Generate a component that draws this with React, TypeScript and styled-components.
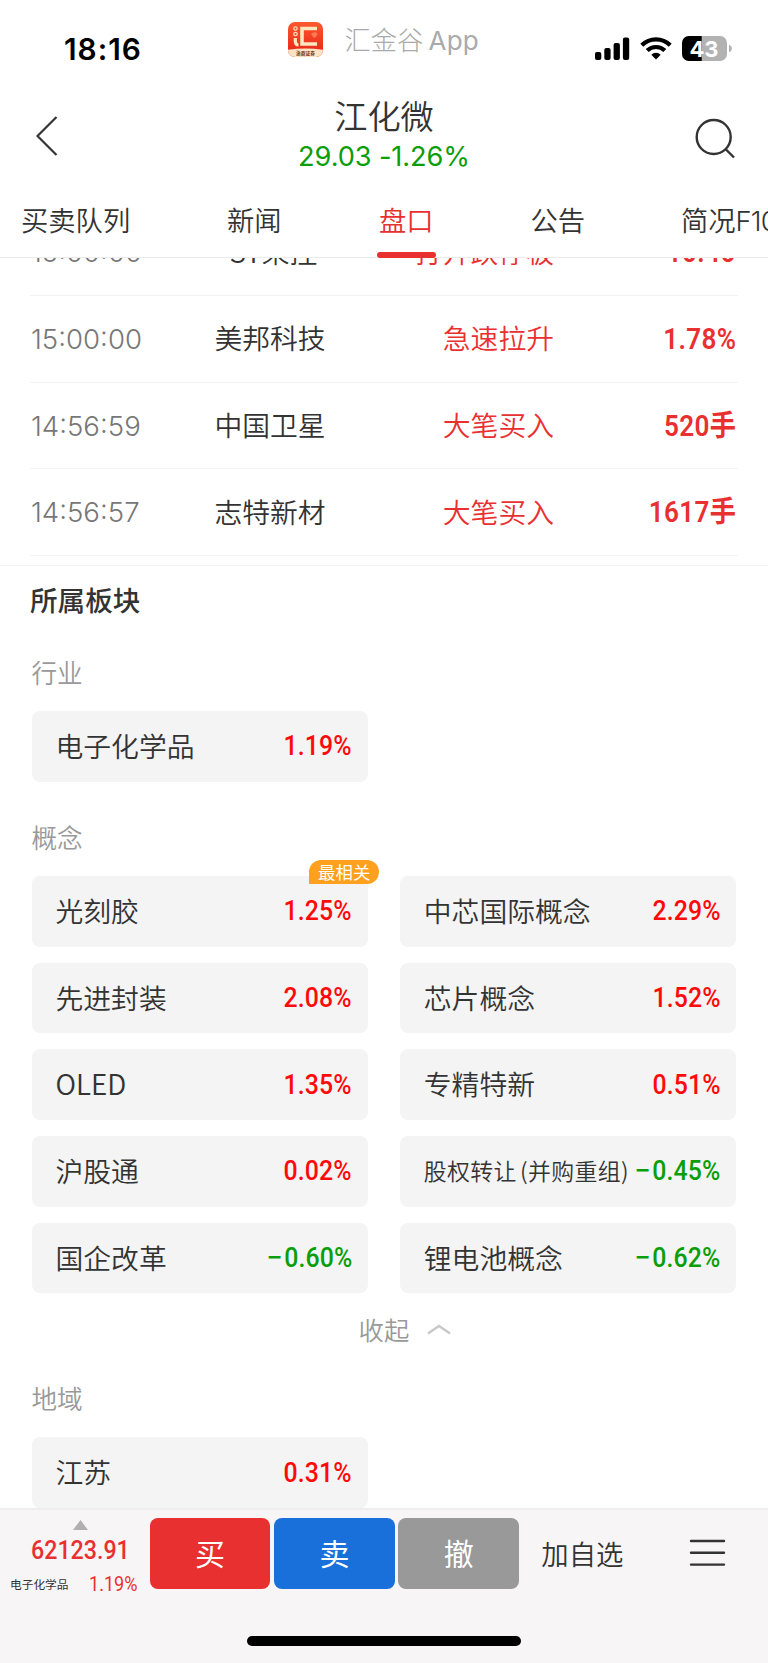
import React from "react";
import styled, { createGlobalStyle } from "styled-components";

const CJK = '"Noto Sans CJK SC", sans-serif';
const LATIN = 'Inter, "Noto Sans CJK SC", sans-serif';
const NUM = 'Roboto, "Noto Sans CJK SC", sans-serif';

const Global = createGlobalStyle`
  * { box-sizing: border-box; }
  body { margin: 0; background: #fff; color: #333; font-family: ${CJK}; }
`;

const Page = styled.div`
  width: 768px;
  height: 1663px;
  display: flex;
  flex-direction: column;
  overflow: hidden;
  background: #fff;
`;

const StatusBar = styled.header`
  flex: none;
  height: 92px;
  padding: 0 36px 0 64px;
  display: flex;
  justify-content: space-between;
`;
const Clock = styled.div`
  width: 223px;
  padding-top: 31px;
  font: 600 29.8px/36px ${LATIN};
  color: #000;
  letter-spacing: 1px;
`;
const AppTag = styled.div`
  flex: 1;
  padding-top: 21px;
  display: flex;
  align-items: flex-start;
`;
const AppName = styled.span`
  margin-left: 20.5px;
  font: 300 26.3px/39px ${LATIN};
  color: #aaa;
  span { margin-left: 5px; font-weight: 400; font-size: 26px; letter-spacing: 0.3px; }
`;
const Indicators = styled.div`
  display: flex;
  align-items: flex-start;
  padding-top: 36px;
`;

const TitleBar = styled.div`
  flex: none;
  height: 90px;
  padding: 0 33px 0 36px;
  display: grid;
  grid-template-columns: 1fr auto 1fr;
  align-items: start;
`;
const Back = styled.svg`
  margin-top: 24px;
`;
const SearchIcon = styled.svg`
  margin-top: 25.5px;
  justify-self: end;
`;
const TitleText = styled.div`
  text-align: center;
  margin-left: -3px;
  h1 { margin: -2px 0 0; font: 400 33.2px/50px ${CJK}; font-weight: 350; }
  p { margin: 3px 0 0; font: 400 27.2px/28px ${LATIN}; color: #0a9e0a; letter-spacing: -0.1px; }
`;

const Tabs = styled.nav`
  flex: none;
  height: 76px;
  border-bottom: 1px solid #ececec;
  padding-left: 21px;
  display: flex;
  white-space: nowrap;
`;
const Tab = styled.div<{ $w: number; $active?: boolean }>`
  flex: none;
  position: relative;
  width: ${(p) => p.$w}px;
  padding-top: 17px;
  font: 400 27.3px/40px ${CJK};
  font-weight: 350;
  color: ${(p) => (p.$active ? "#e93030" : "#333")};
  &::after {
    content: "";
    display: ${(p) => (p.$active ? "block" : "none")};
    position: absolute;
    left: -2px;
    bottom: -1px;
    width: 59px;
    height: 6px;
    border-radius: 3px;
    background: #e93030;
  }
`;
const TabLatin = styled.span`
  font-family: ${LATIN};
  letter-spacing: -0.8px;
`;

const Scroll = styled.main`
  height: 1250px;
  overflow: hidden;
  display: flex;
  flex-direction: column;
`;
const List = styled.div`
  flex: none;
  margin: -48.5px 30px 0;
`;
const Row = styled.div`
  height: 86.67px;
  border-bottom: 1px solid #f2f2f2;
  display: grid;
  grid-template-columns: 150px 180px 194px 1fr;
  align-items: center;
  font-size: 27.8px;
  line-height: 40px;
  font-weight: 350;
`;
const Time = styled.span`
  padding-left: 1px;
  font: 300 27.6px/40px ${LATIN};
  color: #777;
`;
const Name = styled.span`
  padding-bottom: 3px;
  text-align: center;
  ${Row}:first-child & { padding-right: 6px; }
`;
const Event = styled.span`
  padding-bottom: 3px;
  text-align: right;
  color: #e93030;
`;
const Narrow = styled.span<{ $size: number; $color: string; $left?: boolean; $weight?: number; $spacing?: number }>`
  display: inline-block;
  transform: scaleX(0.9);
  transform-origin: ${(p) => (p.$left ? "left" : "right")} center;
  font-family: ${NUM};
  font-size: ${(p) => p.$size}px;
  font-weight: ${(p) => p.$weight ?? 500};
  letter-spacing: ${(p) => p.$spacing ?? 0}px;
  color: ${(p) => p.$color};
  white-space: nowrap;
`;
const Amount = styled.div`
  text-align: right;
  padding: 0 2px 2px 0;
`;
const Minus = styled.span`
  display: inline-block;
  margin-right: 3px;
  transform: scaleX(1.15);
`;

const Section = styled.section`
  margin-top: 9px;
  border-top: 1px solid #f3f3f3;
  padding: 0 31.5px;
`;
const Heading = styled.h2`
  margin: 12px 0 0 -1.5px;
  font: 500 27.6px/42px ${CJK};
`;
const Group = styled.h3<{ $top: number }>`
  margin: ${(p) => p.$top}px 0 21px;
  font: 400 25.6px/36px ${CJK};
  font-weight: 350;
  color: #999;
`;
const Grid = styled.div`
  display: grid;
  grid-template-columns: 336.7px 336.7px;
  grid-auto-rows: 70.7px;
  gap: 16px 31.6px;
`;
const Chip = styled.div`
  position: relative;
  border-radius: 8px;
  background: #f4f4f4;
  padding: 0 16px 0 24px;
  display: flex;
  align-items: center;
  justify-content: space-between;
  white-space: nowrap;
`;
const ChipName = styled.span<{ $small?: boolean }>`
  padding-bottom: 2.5px;
  font-size: ${(p) => (p.$small ? 22.9 : 27.8)}px;
  letter-spacing: ${(p) => (p.$small ? 0.35 : 0)}px;
  word-spacing: ${(p) => (p.$small ? -2.2 : 0)}px;
  margin-right: -12px;
  font-weight: 350;
`;
const ChipValue = styled.span`
  padding-bottom: 1px;
`;
const Badge = styled.span`
  position: absolute;
  right: -11px;
  top: -15.5px;
  width: 70px;
  height: 24px;
  border-radius: 12px 12px 12px 0;
  background: #ffa01e;
  color: #fff;
  text-align: center;
  font: 400 17.4px/23.5px ${CJK};
`;
const Fold = styled.div`
  margin-top: 16px;
  padding-left: 327px;
  display: flex;
  align-items: center;
  font: 400 25.4px/40px ${CJK};
  font-weight: 350;
  color: #999;
  svg { margin-left: 18px; }
`;

const Bottom = styled.footer`
  flex: none;
  height: 155px;
  border-top: 2px solid #efeeef;
  background: #f7f5f6;
  display: flex;
  flex-direction: column;
  align-items: center;
`;
const Actions = styled.div`
  flex: none;
  width: 100%;
  height: 79px;
  padding-top: 8px;
  display: flex;
`;
const Index = styled.div`
  width: 149.7px;
  padding-left: 10px;
`;
const IndexValue = styled.div`
  height: 29px;
  margin-top: 5.5px;
  padding-left: 20.5px;
  line-height: 29px;
`;
const Triangle = styled.div`
  width: 15px;
  height: 10px;
  margin: 2px 0 0 63px;
  background: #b0b0b0;
  clip-path: polygon(50% 0, 100% 100%, 0 100%);
`;
const IndexRow = styled.div`
  display: flex;
  margin-top: 6.5px;
  font: 400 11.7px/26px ${CJK};
  > :last-child { margin-left: 21px; }
`;
const Button = styled.button<{ $bg: string }>`
  width: 120.7px;
  height: 71px;
  margin-right: 3.7px;
  border: 0;
  padding: 0 0 3px;
  border-radius: 8px;
  background: ${(p) => p.$bg};
  color: #fff;
  font: 400 30px/68px ${CJK};
`;
const AddLink = styled.span`
  margin-left: 18.5px;
  font: 400 27.4px/71px ${CJK};
  font-weight: 350;
`;
const MenuIcon = styled.svg`
  margin: 20.5px 0 0 65px;
`;
const HomeIndicator = styled.div`
  width: 274px;
  height: 10px;
  margin-top: 47px;
  border-radius: 5px;
  background: #000;
`;

const RED = "#e93030";
const UP = "#ff0a0a";
const DOWN = "#0a9e0a";

const events = [
  { time: "15:00:00", name: "*ST荣控", event: "打开跌停板", value: "10.46" },
  { time: "15:00:00", name: "美邦科技", event: "急速拉升", value: "1.78%" },
  { time: "14:56:59", name: "中国卫星", event: "大笔买入", value: "520手" },
  { time: "14:56:57", name: "志特新材", event: "大笔买入", value: "1617手" },
];

const concepts = [
  ["光刻胶", "1.25%"],
  ["中芯国际概念", "2.29%"],
  ["先进封装", "2.08%"],
  ["芯片概念", "1.52%"],
  ["OLED", "1.35%"],
  ["专精特新", "0.51%"],
  ["沪股通", "0.02%"],
  ["股权转让 (并购重组)", "−0.45%"],
  ["国企改革", "−0.60%"],
  ["锂电池概念", "−0.62%"],
];

function BoardChip({ name, value, badge }: { name: string; value: string; badge?: string }) {
  const down = value.startsWith("−");
  return (
    <Chip>
      <ChipName $small={name.length > 8}>{name}</ChipName>
      <ChipValue>
        <Narrow $size={27.6} $color={down ? DOWN : UP} $spacing={0.15}>
          {down && <Minus>−</Minus>}
          {value.replace("−", "")}
        </Narrow>
      </ChipValue>
      {badge && <Badge>{badge}</Badge>}
    </Chip>
  );
}

function AppLogo() {
  return (
    <svg width="37" height="37" viewBox="0 0 37 37">
      <defs>
        <linearGradient id="logoRed" x1="0" y1="0" x2="0" y2="1">
          <stop offset="0" stopColor="#ff5a30" />
          <stop offset="1" stopColor="#e21f14" />
        </linearGradient>
        <clipPath id="logoClip"><rect x="1" y="1" width="35" height="35" rx="7" /></clipPath>
      </defs>
      <g clipPath="url(#logoClip)">
        <rect width="37" height="37" fill="url(#logoRed)" />
        <path d="M0 29 Q18.500 26 37 29 V37 H0 Z" fill="#fbe3c4" />
        <path d="M30 7.500 H15 V23 H30" fill="none" stroke="#fbe6c0" strokeWidth="3.600" />
        <path d="M8.300 17 V20 Q8.300 24 11.500 24" fill="none" stroke="#fbe6c0" strokeWidth="3.200" />
        <circle cx="8.500" cy="7.500" r="1.700" fill="none" stroke="#fbd9b0" strokeWidth="1.300" />
        <circle cx="8.500" cy="13" r="1.700" fill="none" stroke="#fbd9b0" strokeWidth="1.300" />
        <path d="M24 13 q3 -3 6 -1 q1 3 -3 5 z" fill="#ff7a50" />
      </g>
      <text x="18.500" y="34.300" textAnchor="middle" fontFamily="Noto Sans CJK SC" fontWeight="700" fontSize="4.700" fill="#6b3318">浙商证券</text>
    </svg>
  );
}

function Signal() {
  return (
    <svg width="35" height="24" viewBox="0 0 35 24">
      <rect x="0" y="16" width="6.300" height="8" rx="2" />
      <rect x="9.300" y="12" width="6.300" height="12" rx="2" />
      <rect x="18.600" y="7" width="6.300" height="17" rx="2" />
      <rect x="27.900" y="1.500" width="6.300" height="22.500" rx="2" />
    </svg>
  );
}

const WifiSvg = styled.svg`
  margin-left: 10px;
`;
function Wifi() {
  return (
    <WifiSvg width="32" height="24" viewBox="0 0 32 24">
      <g fill="none" stroke="#000" strokeWidth="4.200">
        <path d="M1.800 9.200 A20 20 0 0 1 30.200 9.200" />
        <path d="M7.200 14.600 A12.500 12.500 0 0 1 24.800 14.600" />
      </g>
      <path d="M16 23.500 L11.300 18.700 A6.600 6.600 0 0 1 20.700 18.700 Z" />
    </WifiSvg>
  );
}

const BatterySvg = styled.svg`
  margin-left: 10px;
`;
function Battery() {
  return (
    <BatterySvg width="50" height="26" viewBox="0 0 50 26">
      <defs><clipPath id="batt"><rect width="45" height="25" rx="7" /></clipPath></defs>
      <g clipPath="url(#batt)">
        <rect width="45" height="25" fill="#b2b2b2" />
        <rect width="19.700" height="25" fill="#000" />
      </g>
      <path d="M47 8.700 Q50 10 50 12.500 Q50 15 47 16.300 Z" fill="#b2b2b2" />
      <text x="22" y="20.600" textAnchor="middle" fontFamily="Inter" fontWeight="700" fontSize="22" fill="#fff">43</text>
    </BatterySvg>
  );
}

export default function App() {
  return (
    <Page>
      <Global />
      <StatusBar>
        <Clock>18:16</Clock>
        <AppTag>
          <AppLogo />
          <AppName>汇金谷<span>App</span></AppName>
        </AppTag>
        <Indicators>
          <Signal />
          <Wifi />
          <Battery />
        </Indicators>
      </StatusBar>
      <TitleBar>
        <Back width="22" height="40" viewBox="0 0 22 40" fill="none" stroke="#333" strokeWidth="2.200">
          <path d="M20.500 1 L1.500 20 L20.500 39" />
        </Back>
        <TitleText>
          <h1>江化微</h1>
          <p>29.03 -1.26%</p>
        </TitleText>
        <SearchIcon width="40" height="41" viewBox="0 0 40 41" fill="none" stroke="#333" strokeWidth="2.400">
          <circle cx="18.700" cy="19" r="17" />
          <path d="M30.500 31 L39 39.500" />
        </SearchIcon>
      </TitleBar>
      <Tabs>
        <Tab $w={206}>买卖队列</Tab>
        <Tab $w={152}>新闻</Tab>
        <Tab $w={151.5} $active>盘口</Tab>
        <Tab $w={150.5}>公告</Tab>
        <Tab $w={110}>简况<TabLatin>F10</TabLatin></Tab>
      </Tabs>
      <Scroll>
        <List>
          {events.map((e, i) => (
            <Row key={i}>
              <Time>{e.time}</Time>
              <Name>{e.name}</Name>
              <Event>{e.event}</Event>
              <Amount>
                <Narrow $size={29} $color={RED} $weight={600} $spacing={0.4}>{e.value}</Narrow>
              </Amount>
            </Row>
          ))}
        </List>
        <Section>
          <Heading>所属板块</Heading>
          <Group $top={34}>行业</Group>
          <Grid><BoardChip name="电子化学品" value="1.19%" /></Grid>
          <Group $top={37}>概念</Group>
          <Grid>
            {concepts.map(([name, value], i) => (
              <BoardChip key={name} name={name} value={value} badge={i === 0 ? "最相关" : undefined} />
            ))}
          </Grid>
          <Fold>
            收起
            <svg width="24" height="11" viewBox="0 0 24 11" fill="none" stroke="#c8c8c8" strokeWidth="2.400">
              <path d="M1 9.500 L12 2 L23 9.500" />
            </svg>
          </Fold>
          <Group $top={31}>地域</Group>
          <Grid><BoardChip name="江苏" value="0.31%" /></Grid>
        </Section>
      </Scroll>
      <Bottom>
        <Actions>
          <Index>
            <Triangle />
            <IndexValue><Narrow $size={25.8} $color={RED} $left>62123.91</Narrow></IndexValue>
            <IndexRow>
              <span>电子化学品</span>
              <Narrow $size={20.1} $color={RED} $left $weight={400}>1.19%</Narrow>
            </IndexRow>
          </Index>
          <Button $bg="#e93030">买</Button>
          <Button $bg="#1a70da">卖</Button>
          <Button $bg="#999">撤</Button>
          <AddLink>加自选</AddLink>
          <MenuIcon width="37" height="28" viewBox="0 0 37 28" stroke="#333" strokeWidth="2.400" strokeLinecap="round">
            <path d="M2 2 H35 M2 13.800 H35 M2 25.600 H35" />
          </MenuIcon>
        </Actions>
        <HomeIndicator />
      </Bottom>
    </Page>
  );
}
